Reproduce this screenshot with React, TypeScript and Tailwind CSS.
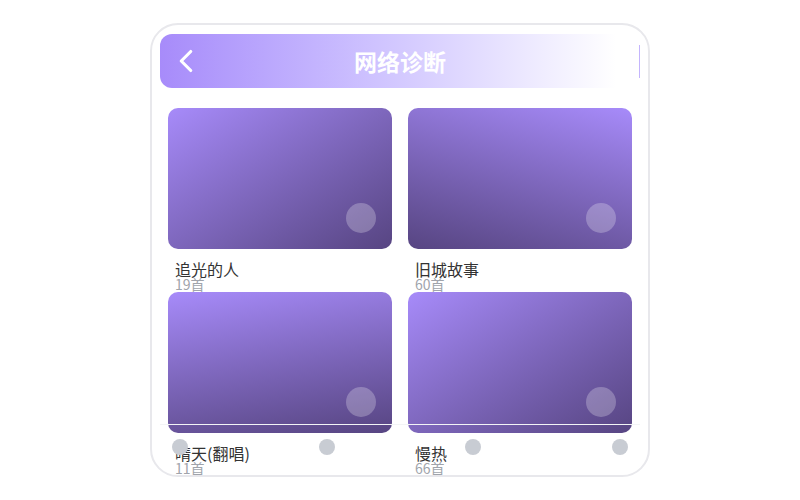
import { ChevronLeft } from "lucide-react";

const albums = [
  { name: "追光的人", count: 19, bg: "bg-linear-to-br" },
  { name: "旧城故事", count: 60, bg: "bg-linear-195" },
  { name: "晴天(翻唱)", count: 11, bg: "bg-linear-170" },
  { name: "慢热", count: 66, bg: "bg-linear-to-br" },
];

function AlbumCard({ name, count, bg }: { name: string; count: number; bg: string }) {
  return (
    <div>
      <div className={`relative h-[141px] rounded-[10px] ${bg} from-[#a78bfa] to-[#574582]`}>
        <div className="absolute right-4 bottom-4 h-[30px] w-[30px] rounded-full bg-white/25" />
      </div>
      <div className="mt-3 h-[31px] pl-[7px]">
        <div className="text-base leading-4 text-[#333]">{name}</div>
        <div className="text-[14px] leading-[15px] text-[#a0a4ab]">{count}首</div>
      </div>
    </div>
  );
}

export default function App() {
  return (
    <div className="flex h-[500px] w-full items-center justify-center bg-white font-['Noto_Sans_CJK_SC',sans-serif]">
      <div className="relative flex h-[454px] w-[500px] flex-col overflow-hidden rounded-[28px] border-2 border-[#e8e8ec] bg-white px-2 pt-[9px]">
        {/* header */}
        <div className="flex h-[54px] shrink-0 items-center rounded-xl bg-linear-to-r from-[#a78bfa] to-white to-95%">
          <div className="flex w-[48px] items-center pl-[7px]">
            <ChevronLeft size={38} strokeWidth={2} className="text-white" />
          </div>
          <div className="flex-1 text-center text-[23px] font-bold text-white">网络诊断</div>
          <div className="flex w-[48px] justify-end">
            <div className="h-[33px] w-px bg-[#c4b5fd]" />
          </div>
        </div>

        <div className="mt-5 grid grid-cols-2 gap-x-4 px-2">
          {albums.map((a) => (
            <AlbumCard key={a.name} {...a} />
          ))}
        </div>

        {/* bottom tab bar */}
        <div className="absolute inset-x-2 bottom-[7px] flex h-[44px] justify-between border-t border-gray-100 px-3 pt-[14px]">
          <div className="h-4 w-4 rounded-full bg-[#c8ccd3]" />
          <div className="h-4 w-4 rounded-full bg-[#c8ccd3]" />
          <div className="h-4 w-4 rounded-full bg-[#c8ccd3]" />
          <div className="h-4 w-4 rounded-full bg-[#c8ccd3]" />
        </div>
      </div>
    </div>
  );
}
